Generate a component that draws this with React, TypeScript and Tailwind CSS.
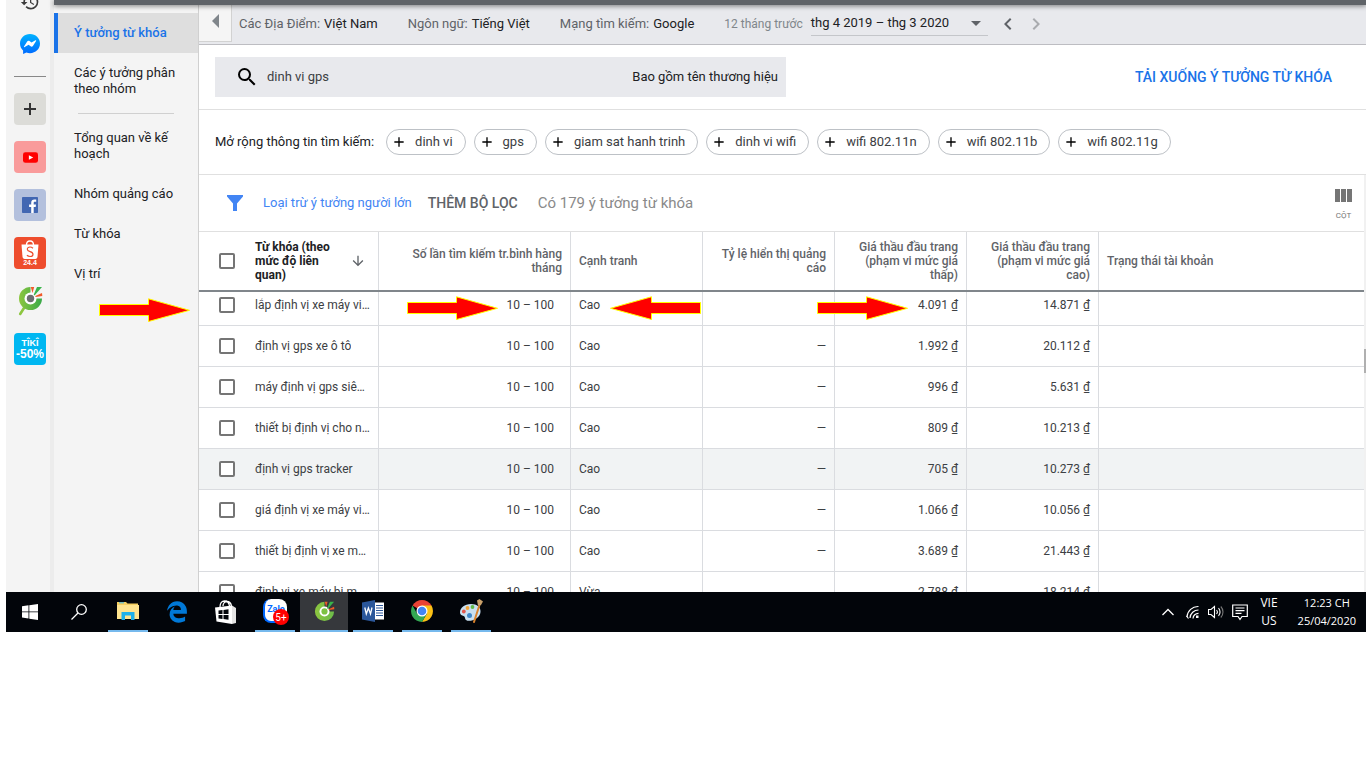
import type { ReactNode } from 'react'
import {
  MdAdd,
  MdArrowDownward,
  MdArrowDropDown,
  MdChevronLeft,
  MdChevronRight,
  MdHistory,
  MdSearch,
} from 'react-icons/md'
import { FaEdgeLegacy } from 'react-icons/fa6'

const CHIPS = [
  'dinh vi',
  'gps',
  'giam sat hanh trinh',
  'dinh vi wifi',
  'wifi 802.11n',
  'wifi 802.11b',
  'wifi 802.11g',
]

type Row = {
  keyword: string
  competition: string
  share: string
  low: string
  high: string
}

const ROWS: Row[] = [
  { keyword: 'lắp định vị xe máy viettel', competition: 'Cao', share: '', low: '4.091', high: '14.871' },
  { keyword: 'định vị gps xe ô tô', competition: 'Cao', share: '—', low: '1.992', high: '20.112' },
  { keyword: 'máy định vị gps siêu nhỏ', competition: 'Cao', share: '—', low: '996', high: '5.631' },
  { keyword: 'thiết bị định vị cho người già', competition: 'Cao', share: '—', low: '809', high: '10.213' },
  { keyword: 'định vị gps tracker', competition: 'Cao', share: '—', low: '705', high: '10.273' },
  { keyword: 'giá định vị xe máy viettel', competition: 'Cao', share: '—', low: '1.066', high: '10.056' },
  { keyword: 'thiết bị định vị xe máy', competition: 'Cao', share: '—', low: '3.689', high: '21.443' },
  { keyword: 'định vị xe máy bị mất trộm', competition: 'Vừa', share: '', low: '2.788', high: '18.214' },
]

const HOVERED_ROW = 4

function MessengerIcon() {
  return (
    <svg viewBox="0 0 20 20" className="size-5" aria-hidden="true">
      <defs>
        <linearGradient id="messenger" x1="0" y1="0" x2="0" y2="1">
          <stop offset="0" stopColor="#00b2ff" />
          <stop offset="1" stopColor="#006aff" />
        </linearGradient>
      </defs>
      <path
        d="M10 0C4.400 0 0 4.100 0 9.600c0 2.900 1.200 5.300 3.100 7V20l3.300-1.400c1.100.4 2.300.6 3.600.6 5.600 0 10-4.100 10-9.600S15.600 0 10 0z"
        fill="url(#messenger)"
      />
      <path d="M4 12.400l3.200-5c.5-.8 1.500-1 2.300-.4l2 1.500 3.900-2.200c.5-.3 1 .2.700.7l-3.200 4.900c-.5.8-1.500 1-2.300.4l-2-1.500-3.900 2.300c-.5.200-1-.2-.7-.7z" fill="#fff" />
    </svg>
  )
}

function YoutubeIcon() {
  return (
    <svg viewBox="0 0 14 10" className="h-[11px] w-[15px]" aria-hidden="true">
      <rect width="14" height="10" rx="2.200" fill="#f00" />
      <path d="M5.500 3l4 2-4 2z" fill="#fff" />
    </svg>
  )
}

function FacebookIcon() {
  return (
    <svg viewBox="0 0 16 16" className="size-4" aria-hidden="true">
      <rect width="16" height="16" rx="0.800" fill="#4267b2" />
      <path d="M9.200 16V9.900H7.100V7.500h2.100V5.700c0-2.100 1.300-3.200 3.100-3.200.9 0 1.700.1 1.900.1v2.200h-1.300c-1 0-1.200.5-1.200 1.200v1.500H14l-.3 2.400h-2V16z" fill="#fff" />
    </svg>
  )
}

function ShopeeBag() {
  return (
    <svg viewBox="0 0 18 19" className="h-[19px] w-[18px]" aria-hidden="true">
      <path d="M5.500 5C5.500 2.500 7 1 9 1s3.500 1.500 3.500 4" fill="none" stroke="#fff" strokeWidth="1.400" />
      <path d="M.5 4.500h17l-1 12.300c-.1 1.200-.9 2.200-2.200 2.200H3.700c-1.300 0-2.100-1-2.200-2.200z" fill="#fff" />
      <path d="M12 8.200C11 7.400 10 7 9 7c-1.600 0-2.700.9-2.700 2.200 0 3 5.700 1.800 5.700 5 0 1.400-1.200 2.300-2.900 2.300-1.200 0-2.300-.5-3.200-1.300" fill="none" stroke="#ee4d2d" strokeWidth="1.200" />
    </svg>
  )
}

function CocCocIcon({ handle = false }: { handle?: boolean }) {
  return (
    <svg viewBox={handle ? '0 0 25 30' : '0 0 25 24'} className={handle ? 'h-[30px] w-[25px]' : 'h-5 w-[21px]'} aria-hidden="true">
      <defs>
        <linearGradient id={handle ? 'leaf-rail' : 'leaf-task'} x1="0" y1="0" x2="1" y2="0">
          <stop offset="0" stopColor="#8cc63f" />
          <stop offset="1" stopColor={handle ? '#39a949' : '#6cbb4a'} />
        </linearGradient>
      </defs>
      {handle && <path d="M6 22L2.200 28" stroke="#8cc63f" strokeWidth="2.600" strokeLinecap="round" />}
      <path
        d="M12.500 1A11.500 11.500 0 1 0 24 12.500h-5.500L12.500 12.500z"
        fill={handle ? 'url(#leaf-rail)' : 'url(#leaf-task)'}
      />
      <circle cx="12.500" cy="12.500" r="6" fill="#fff" />
      <circle cx="12.500" cy="12.500" r="3.700" fill={handle ? '#6d6e71' : '#7cc243'} />
      <path d="M12.800 1h3.400l-1.700 6z" fill="#f15a29" />
      <path d="M19 1h5l-7.500 8.500-.8-.8z" fill="#39b54a" />
      <path d="M24 7l.3 3-6.800.9-.2-1z" fill="#f15a29" />
    </svg>
  )
}

function RailTile({ label, className, children }: { label: string; className: string; children: ReactNode }) {
  return (
    <button aria-label={label} className={`flex size-8 shrink-0 flex-col items-center justify-center rounded ${className}`}>
      {children}
    </button>
  )
}

function BrowserRail() {
  return (
    <aside className="flex w-12 shrink-0 flex-col items-center gap-4 border-r-4 border-[#ececec] bg-[#f4f4f4] pl-1">
      <button aria-label="History" className="flex h-3 w-8 items-end justify-center overflow-hidden text-[#3c3c3c]">
        <MdHistory className="size-5 shrink-0" />
      </button>
      <RailTile label="Messenger" className="">
        <MessengerIcon />
      </RailTile>
      <hr className="h-px w-8 border-0 bg-[#888888]" />
      <RailTile label="Add" className="bg-[#dcdcd8] text-[#333333]">
        <svg viewBox="0 0 12 12" className="size-3" aria-hidden="true">
          <path d="M6 0v12M0 6h12" stroke="#333333" strokeWidth="2" />
        </svg>
      </RailTile>
      <RailTile label="YouTube" className="bg-[#f99b9b]">
        <YoutubeIcon />
      </RailTile>
      <RailTile label="Facebook" className="bg-[#b3c0dd]">
        <FacebookIcon />
      </RailTile>
      <RailTile label="Shopee" className="bg-[#ee4d2d] font-['Liberation_Sans',sans-serif] text-white">
        <ShopeeBag />
        <span className="text-[7px] leading-[8px] font-bold">24.4</span>
      </RailTile>
      <RailTile label="Cốc Cốc" className="">
        <CocCocIcon handle />
      </RailTile>
      <RailTile label="Tiki" className="bg-[#00b7f1] font-['Liberation_Sans',sans-serif] font-bold text-white">
        <span className="text-[9px] leading-[10px]">TÎKÎ</span>
        <span className="text-[12px] leading-[12px]">-50%</span>
      </RailTile>
    </aside>
  )
}

function NavLink({ children }: { children: ReactNode }) {
  return (
    <a href="#" className="block py-3 pr-4 pl-5">
      {children}
    </a>
  )
}

function SideNav() {
  return (
    <nav className="w-36 shrink-0 bg-[#f4f4f4] pt-2 text-[13px] leading-4 text-[#202124]">
      <a href="#" className="block border-l-4 border-[#1a73e8] bg-[#dedede] py-3 pl-4 font-medium text-[#1a73e8]">
        Ý tưởng từ khóa
      </a>
      <NavLink>Các ý tưởng phân theo nhóm</NavLink>
      <hr className="mx-6 my-1 h-px border-0 bg-[#d0d0d0]" />
      <NavLink>Tổng quan về kế hoạch</NavLink>
      <NavLink>Nhóm quảng cáo</NavLink>
      <NavLink>Từ khóa</NavLink>
      <NavLink>Vị trí</NavLink>
    </nav>
  )
}

function Setting({ label, value }: { label: string; value: string }) {
  return (
    <button className="flex gap-1 whitespace-nowrap text-[#5f6368]">
      <span>{label}</span>
      <span className="text-[#202124]">{value}</span>
    </button>
  )
}

function ContextBar() {
  return (
    <div className="flex h-10 items-start border-b border-[#bdbdc2] bg-[#e8e9ed] text-[13px] leading-4">
      <button
        aria-label="Thu gọn"
        className="flex h-[37px] w-[33px] items-center justify-center border-r border-b border-[#d2d2d2] bg-[#f5f5f5] pb-1"
      >
        <svg viewBox="0 0 7 14" className="h-[14px] w-[7px]" aria-hidden="true">
          <path d="M7 0v14L0 7z" fill="#80868b" />
        </svg>
      </button>
      <div className="flex h-[37px] items-center gap-[30px] pl-[7px]">
        <Setting label="Các Địa Điểm:" value="Việt Nam" />
        <Setting label="Ngôn ngữ:" value="Tiếng Việt" />
        <Setting label="Mạng tìm kiếm:" value="Google" />
        <div className="flex items-center gap-2">
          <span className="text-[12px] whitespace-nowrap text-[#80868b]">12 tháng trước</span>
          <button className="flex h-6 w-[177px] items-center justify-between border-b border-[#c4c6ca] whitespace-nowrap text-[#202124]">
            thg 4 2019 – thg 3 2020
            <MdArrowDropDown className="size-6 text-[#5f6368]" />
          </button>
          <button aria-label="Trước" className="text-[#5f6368]">
            <MdChevronLeft className="size-6" />
          </button>
          <button aria-label="Sau" className="-ml-1 text-[#a9abaf]">
            <MdChevronRight className="size-6" />
          </button>
        </div>
      </div>
    </div>
  )
}

function SearchSection() {
  return (
    <section className="flex items-center justify-between border-b border-[#e0e0e0] py-3 pr-[34px] pl-4">
      <div className="flex h-10 w-[571px] items-center bg-[#e8e9ed] pr-2 pl-5 text-[13px] leading-[18px] text-[#202124]">
        <label htmlFor="keyword-search" className="flex">
          <MdSearch className="size-6 text-black" />
          <span className="sr-only">Tìm từ khóa</span>
        </label>
        <input
          id="keyword-search"
          type="text"
          defaultValue="dinh vi gps"
          className="ml-2 min-w-0 flex-1 bg-transparent text-[#3c4043] outline-none"
        />
        <button className="whitespace-nowrap">Bao gồm tên thương hiệu</button>
      </div>
      <button className="text-[14px] leading-4 font-medium whitespace-nowrap text-[#1a73e8]">
        TẢI XUỐNG Ý TƯỞNG TỪ KHÓA
      </button>
    </section>
  )
}

function ChipSection() {
  return (
    <section className="flex h-[65px] items-center gap-2 border-b border-[#e0e0e0] pl-4 text-[13px] leading-[18px] whitespace-nowrap text-[#202124]">
      <span className="mr-1">Mở rộng thông tin tìm kiếm:</span>
      {CHIPS.map((chip) => (
        <button key={chip} className="flex h-[26px] items-center gap-2 rounded-full border border-[#bdc1c6] pr-3 pl-1 text-[#3c4043]">
          <MdAdd className="size-4 text-black" />
          {chip}
        </button>
      ))}
    </section>
  )
}

function FilterBar() {
  return (
    <section className="flex h-[57px] items-center border-b border-[#e0e0e0] pr-3 pl-7 whitespace-nowrap">
      <svg viewBox="0 0 16 16" className="size-4" aria-hidden="true">
        <path d="M0 0h16v1.500L10 8.500V16H6V8.500L0 1.500z" fill="#4285f4" />
      </svg>
      <button className="ml-5 text-[13px] text-[#4285f4]">Loại trừ ý tưởng người lớn</button>
      <button className="ml-4 text-[14px] font-medium text-[#5f6368]">THÊM BỘ LỌC</button>
      <span className="ml-5 text-[15px] text-[#8a8a8a]">Có 179 ý tưởng từ khóa</span>
      <button className="ml-auto flex flex-col items-center gap-2 pt-1 text-[8px] leading-3 text-[#757575]">
        <svg viewBox="0 0 17 13" className="h-[13px] w-[17px]" fill="#757575" aria-hidden="true">
          <path d="M0 0h5v13H0zM6 0h5v13H6zM12 0h5v13h-5z" />
        </svg>
        CỘT
      </button>
    </section>
  )
}

function Tick({ label }: { label: string }) {
  return (
    <input
      type="checkbox"
      aria-label={label}
      className="block size-4 shrink-0 appearance-none rounded-xs border-2 border-[#757575] bg-white"
    />
  )
}

function cellShape(index: number) {
  if (index === 0) return 'flex h-[33px] items-end pb-3'
  if (index === ROWS.length - 1) return 'flex h-5 items-start overflow-hidden pt-3'
  return 'flex h-10 items-center'
}

function KeywordTable() {
  const head = 'border-b-2 border-[#80868b] p-0 font-medium'
  const rule = 'h-[58px] flex items-center border-r border-[#dadce0] px-2'
  return (
    <table className="w-full table-fixed border-separate border-spacing-0 text-[12px] text-[#3c4043]">
      <colgroup>
        <col className="w-12" />
        <col className="w-[132px]" />
        <col className="w-48" />
        <col className="w-[132px]" />
        <col className="w-[132px]" />
        <col className="w-[132px]" />
        <col className="w-[132px]" />
        <col />
      </colgroup>
      <thead className="leading-[14px] text-[#5f6368]">
        <tr>
          <th className={head}>
            <div className="pl-5">
              <Tick label="Chọn tất cả" />
            </div>
          </th>
          <th className={`${head} text-left`}>
            <div className={`${rule} justify-between text-[#202124]`}>
              <span className="w-20 font-bold">Từ khóa (theo mức độ liên quan)</span>
              <MdArrowDownward className="mr-1 size-4 text-[#5f6368]" />
            </div>
          </th>
          <th className={`${head} text-right`}>
            <div className={`${rule} justify-end pl-7`}>Số lần tìm kiếm tr.bình hàng tháng</div>
          </th>
          <th className={`${head} text-left`}>
            <div className={rule}>Cạnh tranh</div>
          </th>
          <th className={`${head} text-right`}>
            <div className={`${rule} justify-end`}>Tỷ lệ hiển thị quảng cáo</div>
          </th>
          <th className={`${head} text-right`}>
            <div className={`${rule} justify-end`}>Giá thầu đầu trang (phạm vi mức giá thấp)</div>
          </th>
          <th className={`${head} text-right`}>
            <div className={`${rule} justify-end`}>Giá thầu đầu trang (phạm vi mức giá cao)</div>
          </th>
          <th className={`${head} text-left`}>
            <div className="px-2">Trạng thái tài khoản</div>
          </th>
        </tr>
      </thead>
      <tbody className="leading-4">
        {ROWS.map((row, i) => {
          const shape = cellShape(i)
          const last = i === ROWS.length - 1
          const cell = last ? 'p-0' : 'border-b border-[#dadce0] p-0'
          const line = `${shape} border-r border-[#dadce0] pl-2`
          return (
            <tr key={row.keyword} className={i === HOVERED_ROW ? 'bg-[#f1f3f4]' : 'bg-white'}>
              <td className={cell}>
                <div className={`${shape} pl-5`}>
                  <Tick label={row.keyword} />
                </div>
              </td>
              <td className={cell}>
                <div className={`${line} pr-2`}>
                  <span className="truncate">{row.keyword}</span>
                </div>
              </td>
              <td className={cell}>
                <div className={`${line} justify-end pr-4`}>10 – 100</div>
              </td>
              <td className={cell}>
                <div className={`${line} pr-2`}>{row.competition}</div>
              </td>
              <td className={cell}>
                <div className={`${line} justify-end pr-2`}>{row.share}</div>
              </td>
              <td className={cell}>
                <div className={`${line} justify-end pr-2`}>{row.low} ₫</div>
              </td>
              <td className={cell}>
                <div className={`${line} justify-end pr-2`}>{row.high} ₫</div>
              </td>
              <td className={cell} />
            </tr>
          )
        })}
      </tbody>
    </table>
  )
}

function Marker({ className }: { className: string }) {
  return (
    <svg viewBox="0 0 92 24" className={`pointer-events-none absolute h-6 w-[92px] ${className}`} aria-hidden="true">
      <path d="M.5 6.500H49.500V.8L90.500 12.300 49.500 23.500V17.500H.5z" fill="#f00" stroke="#ff0" strokeWidth="1" />
    </svg>
  )
}

function WordIcon() {
  return (
    <svg viewBox="0 0 22 22" className="size-[22px]" aria-hidden="true">
      <rect x="11" y="2.500" width="11" height="17" fill="#fff" />
      <path d="M14 5.500h7M14 8h7M14 10.500h7M14 13h7M14 15.500h7" stroke="#2b579a" strokeWidth="1" />
      <path d="M0 2.500L13 0v22L0 19.500z" fill="#2b579a" />
      <path d="M2.800 7.500l1.500 6.500 2.100-6 2.100 6L10 7.500" fill="none" stroke="#fff" strokeWidth="1.300" />
    </svg>
  )
}

function ChromeIcon() {
  return (
    <svg viewBox="0 0 24 24" className="size-6" aria-hidden="true">
      <path d="M12 12L2.500 6.500A11 11 0 0 1 21.500 6.500z" fill="#ea4335" />
      <path d="M12 6.500h9.500A11 11 0 0 1 12 23l4.800-8.200z" fill="#fbc116" />
      <path d="M2.500 6.500A11 11 0 0 0 12 23l4.800-8.200L7.200 14.800z" fill="#34a853" />
      <circle cx="12" cy="12" r="5.500" fill="#fff" />
      <circle cx="12" cy="12" r="4.300" fill="#4285f4" />
    </svg>
  )
}

function PaintIcon() {
  return (
    <svg viewBox="0 0 24 24" className="size-6" aria-hidden="true">
      <path d="M12 5C5.500 5 1 9 1 13.500c0 2.500 2 3 3.500 3.500 2 .5 1 2.500 2.500 4 3 2.500 14-.5 14.500-8C22 8 18 5 12 5z" fill="#c8dff0" />
      <circle cx="4.800" cy="12.500" r="1.900" fill="#e2574c" />
      <circle cx="8.500" cy="9" r="1.900" fill="#f4a63a" />
      <circle cx="13.500" cy="8" r="1.900" fill="#5fb946" />
      <circle cx="10.500" cy="16.500" r="2.500" fill="#3f86c8" />
      <path d="M20.500 6L15 23" stroke="#d9822b" strokeWidth="2" strokeLinecap="round" />
      <path d="M18 1.500L20.500 0 24 2.500 22 6l-3 .5z" fill="#c9a06a" />
    </svg>
  )
}

function ZaloIcon() {
  return (
    <span className="relative flex size-6 items-center justify-center rounded-lg border-b-2 border-l-2 border-[#0068ff] bg-white text-[9px] font-bold text-[#0068ff]">
      Zalo
      <span className="absolute top-2.5 left-2 flex size-4 items-center justify-center rounded-full bg-[#f00] text-[10px] font-normal text-white">
        5+
      </span>
    </span>
  )
}

function FolderIcon() {
  return (
    <svg viewBox="0 0 22 18" className="h-[18px] w-[22px]" aria-hidden="true">
      <path d="M0 0h9l1.500 1.500H21V17H0z" fill="#f5cf61" />
      <path d="M0 3h22v14H0z" fill="#ffe48f" />
      <path d="M2 .8h5" stroke="#3fb6e8" strokeWidth="1" />
      <path d="M4.500 10h13v8h-3.500v-4.500H8V18H4.500z" fill="#1fb1ea" />
    </svg>
  )
}

function StoreIcon() {
  return (
    <svg viewBox="0 0 22 24" className="h-6 w-[22px]" aria-hidden="true">
      <path d="M5 7C5 3 7 1 9.500 1S14 3 14.500 6M8 6c0-3 2-4.500 4-4.500S16 3.500 16.500 6" fill="none" stroke="#fff" strokeWidth="1.300" />
      <path d="M0 7.500L17 5.500V24L1.500 21.500z" fill="#fff" />
      <path d="M17 5.500l4 2.500v15L17 24z" fill="#e4e4e4" />
      <path d="M3.500 10.500l4-.5v4h-4zM8.500 9.900l5-.7V14h-5zM3.500 15h4v4l-4-.5zM8.500 15h5v4.800l-5-.7z" fill="#02050a" />
    </svg>
  )
}

function TaskButton({ label, running = false, active = false, children }: { label: string; running?: boolean; active?: boolean; children: ReactNode }) {
  return (
    <button aria-label={label} className={`flex h-10 w-12 flex-col items-center ${active ? 'bg-[#36383c]' : ''}`}>
      <span className="flex flex-1 items-center">{children}</span>
      {running && <span className={`h-0.5 bg-[#76b9ed] ${active ? 'w-full' : 'w-10'}`} />}
    </button>
  )
}

function Taskbar() {
  return (
    <footer className="flex h-10 items-center justify-between bg-[#02050a] pr-2.5 text-white">
      <div className="flex gap-px">
        <TaskButton label="Start">
          <svg viewBox="0 0 16 16" className="size-4" fill="#fff" aria-hidden="true">
            <path d="M0 2.200L6.500 1.300v6.200H0zM7.300 1.200L16 0v7.500H7.300zM0 8.300h6.500v6.200L0 13.600zM7.300 8.300H16V16l-8.700-1.200z" />
          </svg>
        </TaskButton>
        <TaskButton label="Search">
          <svg viewBox="0 0 16 16" className="size-4" fill="none" stroke="#fff" strokeWidth="1.300" aria-hidden="true">
            <circle cx="10.500" cy="5.500" r="4.800" />
            <path d="M7 9L.5 15.500" />
          </svg>
        </TaskButton>
        <TaskButton label="File Explorer" running>
          <FolderIcon />
        </TaskButton>
        <TaskButton label="Edge">
          <FaEdgeLegacy className="size-[22px] text-[#0078d7]" />
        </TaskButton>
        <TaskButton label="Store">
          <StoreIcon />
        </TaskButton>
        <TaskButton label="Zalo" running>
          <ZaloIcon />
        </TaskButton>
        <TaskButton label="Cốc Cốc" running active>
          <CocCocIcon />
        </TaskButton>
        <TaskButton label="Word" running>
          <WordIcon />
        </TaskButton>
        <TaskButton label="Chrome" running>
          <ChromeIcon />
        </TaskButton>
        <TaskButton label="Paint" running>
          <PaintIcon />
        </TaskButton>
      </div>
      <div className="flex items-center gap-2 font-['Open_Sans',sans-serif] text-[12px] leading-[18px]">
        <svg viewBox="0 0 12 8" className="mr-1 h-2 w-3" fill="none" stroke="#fff" strokeWidth="1.300" aria-hidden="true">
          <path d="M.5 7L6 1.500 11.500 7" />
        </svg>
        <svg viewBox="0 0 14 14" className="size-[14px]" fill="none" stroke="#fff" strokeWidth="1.200" aria-hidden="true">
          <path d="M1 12A11 11 0 0 1 12.500 1.500M4 13a8.500 8.500 0 0 1 8.500-8M7 13.500A5.500 5.500 0 0 1 12.500 8.300" />
          <path d="M.5 11l2 2.500" />
          <rect x="10" y="10.500" width="2.500" height="2.500" fill="#fff" stroke="none" />
        </svg>
        <svg viewBox="0 0 16 14" className="h-[14px] w-4" fill="none" stroke="#fff" strokeWidth="1.100" aria-hidden="true">
          <path d="M.5 4.500H3L6.500 1.500v11L3 9.500H.5zM8.500 5a3 3 0 0 1 0 4M10.500 3.200a5.500 5.500 0 0 1 0 7.600" />
          <path d="M12.800 1.500a8 8 0 0 1 0 11" stroke="#777" />
        </svg>
        <svg viewBox="0 0 16 17" className="h-[17px] w-4" fill="none" stroke="#fff" strokeWidth="1.200" aria-hidden="true">
          <path d="M.7 1h14.600v11.500H10L8 15.500l-2-3H.7zM3.500 4h9M3.500 6.700h9M3.500 9.400h6" />
        </svg>
        <div className="ml-1 text-center">
          <div>VIE</div>
          <div>US</div>
        </div>
        <div className="ml-3 text-center text-[11px]">
          <div>12:23 CH</div>
          <div>25/04/2020</div>
        </div>
      </div>
    </footer>
  )
}

export default function App() {
  return (
    <div className="min-h-screen bg-white pl-1.5 font-['Roboto','Liberation_Sans',sans-serif]">
      <div className="relative overflow-hidden">
        <div className="flex">
          <BrowserRail />
          <div className="min-w-0 flex-1">
            <div className="relative z-10 h-[5px] bg-[#5f6368] shadow-[0_1px_5px_rgba(0,0,0,0.5)]" />
            <div className="flex">
              <SideNav />
              <main className="min-w-0 flex-1 border-l border-[#d0d0d0] bg-white">
                <ContextBar />
                <SearchSection />
                <ChipSection />
                <div className="flex">
                  <div className="min-w-0 flex-1">
                    <FilterBar />
                    <KeywordTable />
                  </div>
                  <div className="w-0.5 bg-[#f1f1f1] pt-[174px]">
                    <div className="h-6 bg-[#b0b0b0]" />
                  </div>
                </div>
              </main>
            </div>
          </div>
        </div>
        <Marker className="top-[298px] left-[93px]" />
        <Marker className="top-[296px] left-[401px]" />
        <Marker className="top-[296px] left-[603px] -scale-x-100" />
        <Marker className="top-[296px] left-[811px]" />
      </div>
      <Taskbar />
    </div>
  )
}
